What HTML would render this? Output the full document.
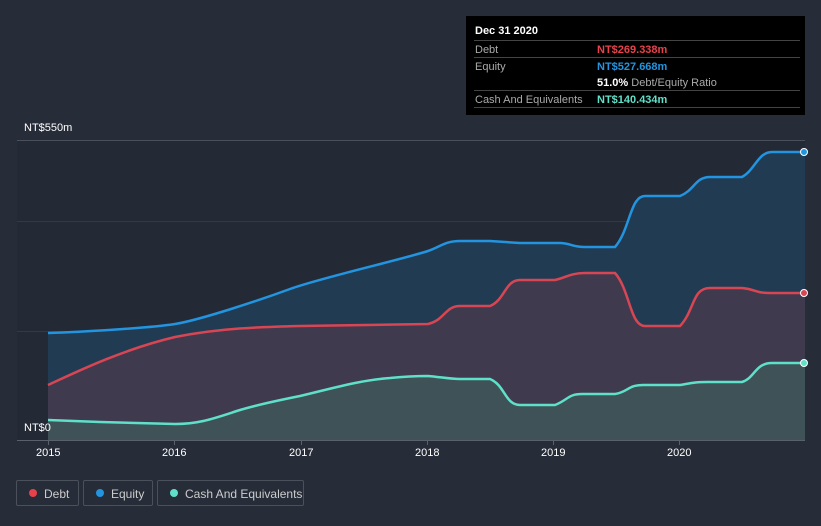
<!DOCTYPE html>
<html><head><style>
body{margin:0;width:821px;height:526px;background:#262c38;font-family:"Liberation Sans",sans-serif;overflow:hidden;position:relative}
.tt{position:absolute;left:466px;top:16px;width:339px;height:99px;background:#000;color:#fff;font-size:11px}
.tt .h{position:absolute;left:9px;top:9px;font-weight:bold}
.row{position:absolute;left:8px;width:326px;border-top:1px solid #444;height:17px}
.row span{position:absolute;top:3px}
.l{left:1px;color:#aaa}.v{left:123px;font-weight:bold}
.leg{position:absolute;top:480px;height:26px;border:1px solid #4a505c;border-radius:2px;color:#ccc;font-size:12px;box-sizing:border-box}
.leg i{position:absolute;left:12px;top:8px;width:8px;height:8px;border-radius:50%}
.leg span{position:absolute;left:27px;top:6px}
.ax{position:absolute;color:#fff;font-size:11px;top:447px}
</style></head><body>
<svg width="821" height="526" style="position:absolute;left:0;top:0">
<rect x="17" y="140" width="788" height="300" fill="#232935"/>
<line x1="17" y1="140.5" x2="805" y2="140.5" stroke="#4a505c"/>
<line x1="17" y1="221.5" x2="805" y2="221.5" stroke="#333a47"/>
<line x1="17" y1="331.5" x2="805" y2="331.5" stroke="#333a47"/>
<path d="M48,333 C80,332 150,328 175,324 C200,320 260,300 290,289 C320,278 400,260 428,251 C440,247 445,241 460,241 L490,241 L520,243 L560,243 C570,243 572,247 585,247 L615,247 C630,230 630,196 645,196 L680,196 C695,190 695,177 710,177 L742,177 C755,170 758,152 772,152 L805,152 L805,440 L48,440 Z" fill="#213b53"/>
<path d="M48,385 C70,375 120,350 175,337 C220,328 260,327 300,326 L428,324 C445,320 445,306 460,306 L490,306 C505,300 505,280 520,280 L555,280 C565,278 570,273 585,273 L615,273 C630,290 630,326 645,326 L680,326 C695,310 692,288 710,288 L742,288 C755,289 755,293 770,293 L805,293 L805,440 L48,440 Z" fill="#403a4e"/>
<path d="M48,420 L100,422 L175,424 C200,424 215,418 240,410 C260,404 280,400 300,396 C330,389 360,380 390,378 C410,376 420,376 428,376 C440,377 450,379 460,379 L490,379 C505,385 505,405 520,405 L555,405 C568,400 568,394 582,394 L615,394 C628,392 628,385 643,385 L680,385 C692,383 695,382 707,382 L742,382 C755,378 755,363 772,363 L805,363 L805,440 L48,440 Z" fill="#3e5258"/>
<path d="M48,333 C80,332 150,328 175,324 C200,320 260,300 290,289 C320,278 400,260 428,251 C440,247 445,241 460,241 L490,241 L520,243 L560,243 C570,243 572,247 585,247 L615,247 C630,230 630,196 645,196 L680,196 C695,190 695,177 710,177 L742,177 C755,170 758,152 772,152 L805,152" fill="none" stroke="#2394df" stroke-width="2.5"/>
<path d="M48,385 C70,375 120,350 175,337 C220,328 260,327 300,326 L428,324 C445,320 445,306 460,306 L490,306 C505,300 505,280 520,280 L555,280 C565,278 570,273 585,273 L615,273 C630,290 630,326 645,326 L680,326 C695,310 692,288 710,288 L742,288 C755,289 755,293 770,293 L805,293" fill="none" stroke="#d84654" stroke-width="2.5"/>
<path d="M48,420 L100,422 L175,424 C200,424 215,418 240,410 C260,404 280,400 300,396 C330,389 360,380 390,378 C410,376 420,376 428,376 C440,377 450,379 460,379 L490,379 C505,385 505,405 520,405 L555,405 C568,400 568,394 582,394 L615,394 C628,392 628,385 643,385 L680,385 C692,383 695,382 707,382 L742,382 C755,378 755,363 772,363 L805,363" fill="none" stroke="#5fe0c9" stroke-width="2.5"/>
<line x1="17" y1="440.5" x2="805" y2="440.5" stroke="#5a606c"/>
<g stroke="#5a606c"><line x1="48.5" y1="440" x2="48.5" y2="445"/><line x1="174.5" y1="440" x2="174.5" y2="445"/><line x1="301.5" y1="440" x2="301.5" y2="445"/><line x1="427.5" y1="440" x2="427.5" y2="445"/><line x1="553.5" y1="440" x2="553.5" y2="445"/><line x1="679.5" y1="440" x2="679.5" y2="445"/></g>
<circle cx="804" cy="152" r="3.5" fill="#2394df" stroke="#fff"/>
<circle cx="804" cy="293" r="3.5" fill="#d84654" stroke="#fff"/>
<circle cx="804" cy="363" r="3.5" fill="#5fe0c9" stroke="#fff"/>
</svg>
<div style="position:absolute;left:24px;top:122px;color:#fff;font-size:11px">NT$550m</div>
<div style="position:absolute;left:24px;top:422px;color:#fff;font-size:11px">NT$0</div>
<div class="ax" style="left:36px">2015</div><div class="ax" style="left:162px">2016</div><div class="ax" style="left:289px">2017</div><div class="ax" style="left:415px">2018</div><div class="ax" style="left:541px">2019</div><div class="ax" style="left:667px">2020</div>
<div class="tt"><div class="h">Dec 31 2020</div>
<div class="row" style="top:24px"><span class="l">Debt</span><span class="v" style="color:#e8414b">NT$269.338m</span></div>
<div class="row" style="top:41px"><span class="l">Equity</span><span class="v" style="color:#2394df">NT$527.668m</span></div>
<div style="position:absolute;left:131px;top:61px;color:#aaa"><b style="color:#fff">51.0%</b> Debt/Equity Ratio</div>
<div class="row" style="top:74px"><span class="l">Cash And Equivalents</span><span class="v" style="color:#5fe0c9">NT$140.434m</span></div>
<div class="row" style="top:91px;height:0"></div>
</div>
<div class="leg" style="left:16px;width:63px"><i style="background:#e8414b"></i><span>Debt</span></div>
<div class="leg" style="left:83px;width:70px"><i style="background:#2394df"></i><span>Equity</span></div>
<div class="leg" style="left:157px;width:147px"><i style="background:#5fe0c9"></i><span>Cash And Equivalents</span></div>
</body></html>
